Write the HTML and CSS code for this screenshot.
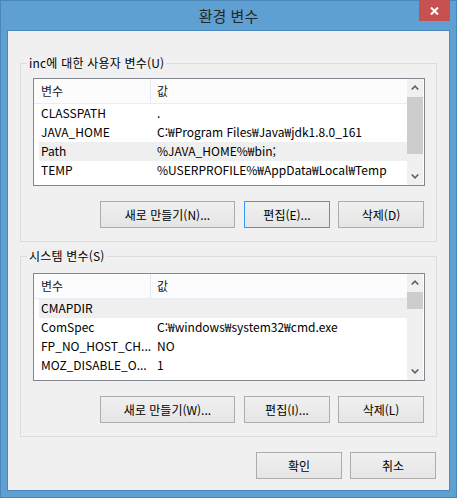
FILE: index.html
```html
<!DOCTYPE html>
<html lang="ko">
<head>
<meta charset="utf-8">
<title>환경 변수</title>
<link rel="stylesheet" href="styles.css">
</head>
<body>
<div class="window">
  <div class="titlebar">환경 변수</div>
  <div class="close">
    <svg width="9" height="8" viewBox="0 0 9 8"><path d="M1 0.5 L8 7.5 M8 0.5 L1 7.5" stroke="#fff" stroke-width="2" fill="none"/></svg>
  </div>
  <div class="client">
    <fieldset class="group group-user">
      <legend>inc에 대한 사용자 변수(U)</legend>
      <div class="list">
        <div class="list-main">
          <div class="list-head"><div class="hcol hcol1">변수</div><div class="hcol hcol2">값</div></div>
          <div class="rows">
            <div class="row"><span class="c1">CLASSPATH</span><span class="c2">.</span></div>
            <div class="row"><span class="c1">JAVA_HOME</span><span class="c2">C:₩Program Files₩Java₩jdk1.8.0_161</span></div>
            <div class="row sel"><span class="c1">Path</span><span class="c2">%JAVA_HOME%₩bin;</span></div>
            <div class="row"><span class="c1">TEMP</span><span class="c2">%USERPROFILE%₩AppData₩Local₩Temp</span></div>
          </div>
        </div>
        <div class="scrollbar">
          <div class="sb-btn"><svg width="8" height="5" viewBox="0 0 8 5"><polyline points="0.7,4.5 4,1.2 7.3,4.5" fill="none" stroke="#606060" stroke-width="1.6"/></svg></div>
          <div class="sb-track"><div class="sb-thumb thumb-user"></div></div>
          <div class="sb-btn"><svg width="8" height="5" viewBox="0 0 8 5"><polyline points="0.7,0.5 4,3.8 7.3,0.5" fill="none" stroke="#606060" stroke-width="1.6"/></svg></div>
        </div>
      </div>
      <div class="btn-row">
        <button class="btn btn-wide">새로 만들기(N)...</button>
        <button class="btn btn-focus">편집(E)...</button>
        <button class="btn">삭제(D)</button>
      </div>
    </fieldset>

    <fieldset class="group group-sys">
      <legend>시스템 변수(S)</legend>
      <div class="list">
        <div class="list-main">
          <div class="list-head"><div class="hcol hcol1">변수</div><div class="hcol hcol2">값</div></div>
          <div class="rows">
            <div class="row sel"><span class="c1">CMAPDIR</span><span class="c2"></span></div>
            <div class="row"><span class="c1">ComSpec</span><span class="c2">C:₩windows₩system32₩cmd.exe</span></div>
            <div class="row"><span class="c1">FP_NO_HOST_CH...</span><span class="c2">NO</span></div>
            <div class="row"><span class="c1">MOZ_DISABLE_O...</span><span class="c2">1</span></div>
          </div>
        </div>
        <div class="scrollbar">
          <div class="sb-btn"><svg width="8" height="5" viewBox="0 0 8 5"><polyline points="0.7,4.5 4,1.2 7.3,4.5" fill="none" stroke="#606060" stroke-width="1.6"/></svg></div>
          <div class="sb-track"><div class="sb-thumb thumb-sys"></div></div>
          <div class="sb-btn"><svg width="8" height="5" viewBox="0 0 8 5"><polyline points="0.7,0.5 4,3.8 7.3,0.5" fill="none" stroke="#606060" stroke-width="1.6"/></svg></div>
        </div>
      </div>
      <div class="btn-row">
        <button class="btn btn-wide">새로 만들기(W)...</button>
        <button class="btn">편집(I)...</button>
        <button class="btn">삭제(L)</button>
      </div>
    </fieldset>

    <div class="dialog-buttons">
      <button class="btn">확인</button>
      <button class="btn">취소</button>
    </div>
  </div>
</div>
</body>
</html>
```

FILE: styles.css
```css
* { box-sizing: border-box; }

body {
  margin: 0;
  font-family: "Noto Sans CJK KR", "Noto Sans", sans-serif;
  font-size: 12px;
  color: #000;
}

.window {
  position: relative;
  width: 457px;
  height: 498px;
  background: #5ea0d1;
  border: 1px solid #4a86ba;
  padding: 0 6px 6px;
  display: flex;
  flex-direction: column;
}

.titlebar {
  height: 29px;
  flex: none;
  display: flex;
  align-items: center;
  justify-content: center;
  font-size: 15px;
  color: #262626;
}

.close {
  position: absolute;
  top: -1px;
  right: 6px;
  width: 31px;
  height: 21px;
  background: #c75050;
  display: flex;
  align-items: center;
  justify-content: center;
}

.client {
  flex: 1;
  background: #f0f0f0;
  border: 1px solid #4d88bb;
  padding: 0 12px;
}

.group {
  margin: 0;
  border: 1px solid #dcdcdc;
  padding: 7px 11px 13px 12px;
  min-width: 0;
}

.group-user { margin-top: 24px; }
.group-sys { margin-top: 6px; padding-top: 9px; }

.group legend {
  padding: 0 2px;
  margin-left: -6px;
  line-height: 16px;
  letter-spacing: 0.2px;
}

.list {
  height: 108px;
  border: 1px solid #828790;
  background: #fff;
  display: flex;
}

.list-main {
  flex: 1;
  overflow: hidden;
}

.list-head {
  display: flex;
  height: 25px;
  background: #fcfcfc;
  border-bottom: 1px solid #e6edf6;
}

.hcol {
  line-height: 23px;
  color: #1a1a1a;
}

.hcol1 {
  width: 117px;
  padding-left: 7px;
  border-right: 1px solid #e3e9f1;
}

.hcol2 { padding-left: 6px; }

.rows { margin-left: 5px; }

.row {
  display: flex;
  height: 19px;
  line-height: 18px;
  padding-left: 2px;
  white-space: nowrap;
}

.row.sel { background: #efefef; }

.c1 { width: 116px; flex: none; }

.scrollbar {
  width: 16px;
  margin-right: 1px;
  background: #f0f0f0;
  display: flex;
  flex-direction: column;
}

.sb-btn {
  height: 17px;
  flex: none;
  display: flex;
  align-items: center;
  justify-content: center;
}

.sb-track { flex: 1; }

.sb-thumb {
  background: #cdcdcd;
  margin-top: 1px;
}

.thumb-user { height: 57px; }
.thumb-sys { height: 17px; }

.btn-row {
  display: flex;
  justify-content: flex-end;
  gap: 8px;
  margin-top: 15px;
  padding-right: 1px;
}

.btn {
  width: 86px;
  height: 27px;
  border: 1px solid #acacac;
  background: linear-gradient(#f0f0f0, #e5e5e5);
  font-family: inherit;
  font-size: 12px;
  color: #000;
  padding: 0;
  border-radius: 0;
}

.btn-wide { width: 135px; margin-right: 1px; }

.btn-focus { border-color: #3399ff; }

.dialog-buttons {
  display: flex;
  justify-content: flex-end;
  gap: 8px;
  margin-top: 15px;
  padding-right: 1px;
}
```
